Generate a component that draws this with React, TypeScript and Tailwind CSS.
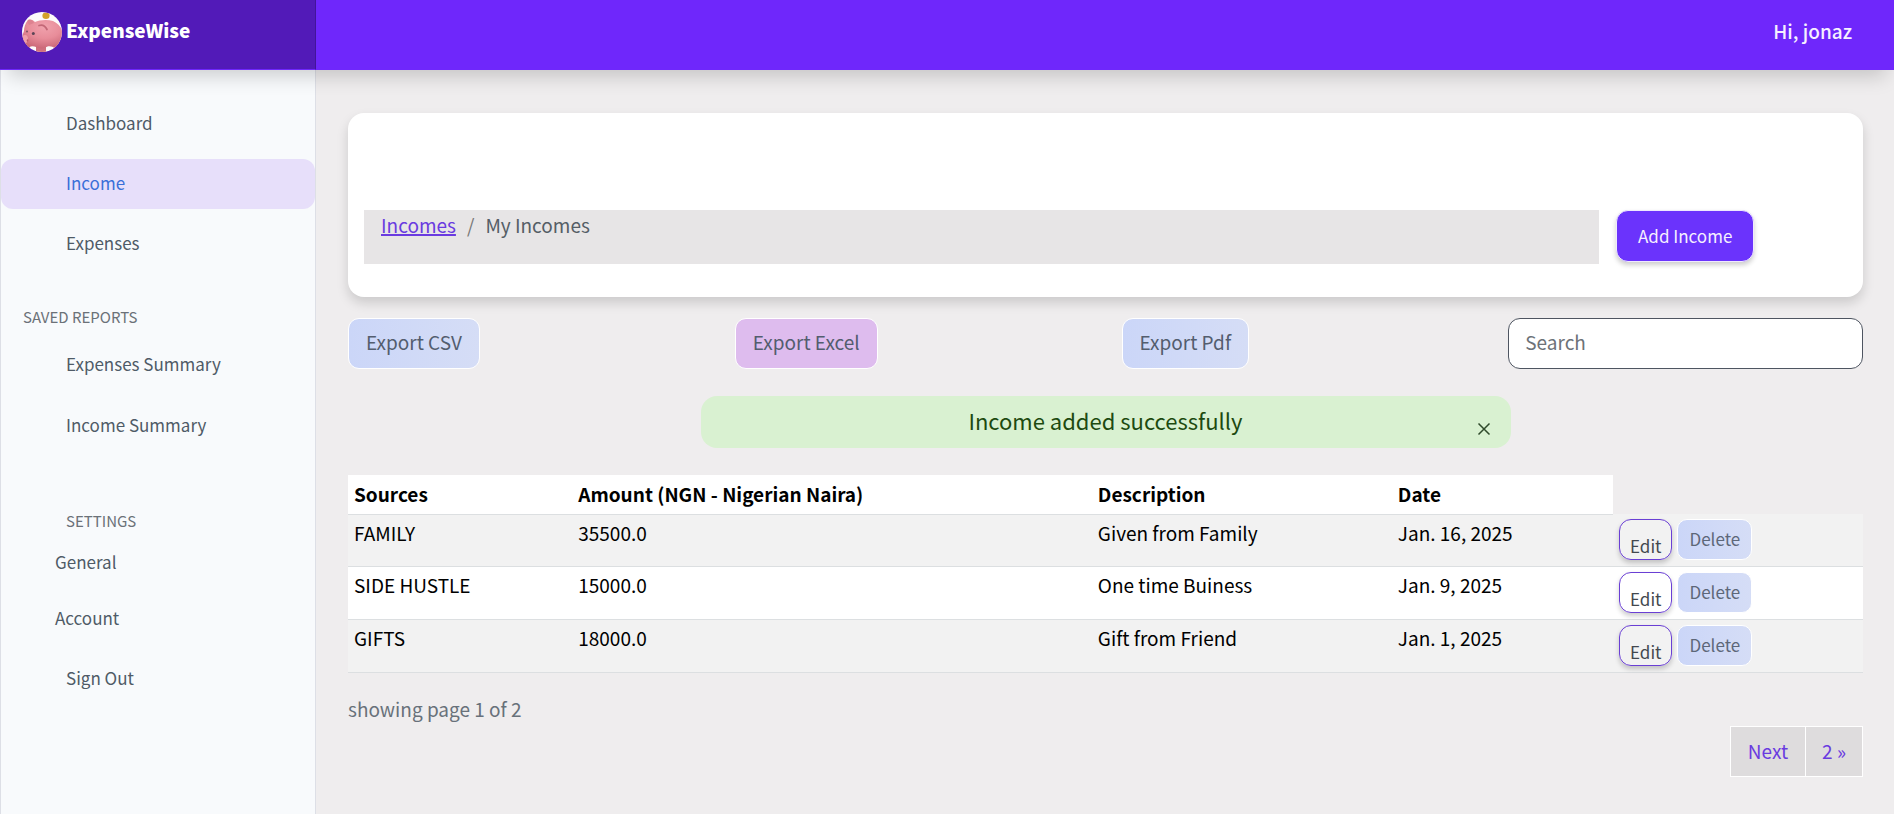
import React from "react";

type Income = { source: string; amount: string; description: string; date: string };

const incomes: Income[] = [
  { source: "FAMILY", amount: "35500.0", description: "Given from Family", date: "Jan. 16, 2025" },
  { source: "SIDE HUSTLE", amount: "15000.0", description: "One time Buiness", date: "Jan. 9, 2025" },
  { source: "GIFTS", amount: "18000.0", description: "Gift from Friend", date: "Jan. 1, 2025" },
];

function PiggyLogo() {
  return (
    <svg viewBox="0 0 40 40" className="size-10 shrink-0" aria-hidden="true">
      <defs>
        <clipPath id="logo-clip">
          <circle cx="20" cy="20" r="20" />
        </clipPath>
        <radialGradient id="pig-body" cx="0.55" cy="0.25" r="0.8">
          <stop offset="0" stopColor="#f0a2ad" />
          <stop offset="0.5" stopColor="#e88d9a" />
          <stop offset="1" stopColor="#c76373" />
        </radialGradient>
      </defs>
      <g clipPath="url(#logo-clip)">
        <rect width="40" height="40" fill="#fdfafa" />
        <path d="M14 33h10v7H14z" fill="#cf6f7e" />
        <path d="M3 31h6l-2 8H4zM31 31h8l-2 8h-5z" fill="#d87685" />
        <path
          d="M6 8c3-1 5 0 7 2 4-2 12-3 18-1 6 3 10 8 10 14 0 7-4 11-10 12-3-1-6-1-8 1-4 1-7 0-9-1-2-1-5-1-7 0C3 34 0 31 0 27c0-3 1-5 2-8 0-4 1-7 4-11z"
          fill="url(#pig-body)"
        />
        <path d="M6 8c3-1 5 0 6 3l-5 2c-1-2-2-3-1-5z" fill="#dd8290" />
        <ellipse cx="3" cy="27" rx="3" ry="4" fill="#f0a0aa" />
        <ellipse cx="5.500" cy="28.500" rx="0.8" ry="1.2" fill="#b95666" />
        <path d="M17 13.500c3-1 6 0 8 4" fill="none" stroke="#c36877" strokeWidth="1.800" strokeLinecap="round" />
        <circle cx="11.300" cy="21.500" r="1.500" fill="#5b4556" />
        <circle cx="5" cy="19.500" r="1" fill="#7a5360" />
        <ellipse cx="24" cy="3.700" rx="3.600" ry="3.200" fill="#d2a02a" />
      </g>
    </svg>
  );
}

function NavLink({ label, active = false }: { label: string; active?: boolean }) {
  return (
    <a
      href="#"
      aria-current={active ? "page" : undefined}
      className={
        active
          ? "flex h-[50px] items-center rounded-xl bg-[#e7dffa] pb-0.5 pl-[65px] text-[#3a6fd8]"
          : "flex h-[50px] items-center rounded-xl pb-0.5 pl-[65px] text-[#4f5b67]"
      }
    >
      {label}
    </a>
  );
}

function Header() {
  return (
    <header className="relative z-10 flex h-[70px] bg-[#6f27fb] shadow-[0_14px_20px_-8px_rgba(0,0,0,0.18)]">
      <div className="flex w-[316px] items-start border-r border-b border-r-[#43149a] border-b-[#6f27fb] bg-[#521ab8] pt-3 pl-[22px]">
        <PiggyLogo />
        <span className="ml-1 text-[19px] leading-9 font-black text-white">ExpenseWise</span>
      </div>
      <div className="flex flex-1 items-center justify-end pr-[42px] pb-2 text-[19px] font-medium text-[#f6f0ff]">
        Hi, jonaz
      </div>
    </header>
  );
}

function Sidebar() {
  return (
    <nav className="w-[316px] shrink-0 border-x border-[#dddfe6] bg-[#f8fafc] pt-[29px] text-[17px]">
      <div className="flex flex-col gap-2.5">
        <NavLink label="Dashboard" />
        <NavLink label="Income" active />
        <NavLink label="Expenses" />
      </div>
      <h2 className="mt-9 pl-[22px] text-[15px] leading-6 text-[#6b7178]">SAVED REPORTS</h2>
      <div className="mt-[11px] flex flex-col gap-[11px]">
        <NavLink label="Expenses Summary" />
        <NavLink label="Income Summary" />
      </div>
      <h2 className="mt-[58px] pl-[65px] text-[15px] leading-6 text-[#6b7178]">SETTINGS</h2>
      <div className="mt-[17px] flex flex-col gap-8 pl-[54px] leading-6 text-[#4f5b67]">
        <a href="#">General</a>
        <a href="#">Account</a>
      </div>
      <div className="mt-6">
        <NavLink label="Sign Out" />
      </div>
    </nav>
  );
}

function ExportButton({ label, purple = false }: { label: string; purple?: boolean }) {
  return (
    <div>
      <button
        type="button"
        className={
          purple
            ? "h-[51px] rounded-[11px] border border-white bg-[#debcee] px-[17px] pb-1 text-[#535d6e]"
            : "h-[51px] rounded-[11px] border border-white bg-linear-to-r from-[#cbd6f8] to-[#d5ddf6] px-[17px] pb-1 text-[#535d6e]"
        }
      >
        {label}
      </button>
    </div>
  );
}

function IncomeTable() {
  return (
    <table className="mt-[27px] w-full table-fixed border-collapse text-left text-black">
      <colgroup>
        <col className="w-[14.8%]" />
        <col className="w-[34.3%]" />
        <col className="w-[19.8%]" />
        <col className="w-[14.6%]" />
        <col />
      </colgroup>
      <thead>
        <tr>
          {["Sources", "Amount (NGN - Nigerian Naira)", "Description", "Date"].map((h) => (
            <th key={h} scope="col" className="h-[39px] border-b border-[#dcdfe1] bg-white px-1.5 pb-px font-bold">
              {h}
            </th>
          ))}
          <td />
        </tr>
      </thead>
      <tbody>
        {incomes.map((row) => (
          <tr key={row.source} className="border-b border-[#dcdfe1] bg-white align-top odd:bg-[#f2f2f2]">
            <td className="px-1.5 pt-1">{row.source}</td>
            <td className="px-1.5 pt-1">{row.amount}</td>
            <td className="px-1.5 pt-1">{row.description}</td>
            <td className="px-1.5 pt-1">{row.date}</td>
            <td className="px-1.5 pt-[5px] pb-1.5">
              <div className="flex gap-[5px] text-[17px] leading-5">
                <a
                  href="#"
                  className="h-[41px] rounded-xl border border-[#6a3fd4] px-2.5 pt-4 text-[#43484f] shadow-[0_3px_5px_rgba(0,0,0,0.2)]"
                >
                  Edit
                </a>
                <button
                  type="button"
                  className="h-[41px] rounded-[10px] border border-white bg-linear-to-r from-[#cbd6f8] to-[#d5ddf6] px-[11px] pb-0.5 text-[#5d6779]"
                >
                  Delete
                </button>
              </div>
            </td>
          </tr>
        ))}
      </tbody>
    </table>
  );
}

export default function App() {
  return (
    <div className="flex min-h-screen flex-col bg-[#efedee] font-['Noto_Sans_CJK_JP','Source_Sans_3',sans-serif] text-[19px] leading-7">
      <Header />
      <div className="flex flex-1">
        <Sidebar />
        <main className="flex-1 pt-[43px] pr-[31px] pb-9 pl-8">
          <section className="flex gap-[17px] rounded-2xl bg-white px-4 pt-[97px] pb-[33px] shadow-[0_6px_12px_rgba(0,0,0,0.15)]">
            <nav aria-label="Breadcrumb" className="h-[54px] flex-1 bg-[#e7e5e6] px-[17px] pt-px">
              <ol className="flex gap-[11px] text-[#555e66]">
                <li>
                  <a href="#" className="text-[#6a3be0] underline decoration-2">
                    Incomes
                  </a>
                </li>
                <li aria-hidden="true" className="text-[#777]">
                  /
                </li>
                <li>My Incomes</li>
              </ol>
            </nav>
            <div className="w-[231px]">
              <button
                type="button"
                className="h-[52px] rounded-xl border border-[#efe9ff] bg-[#6b33fc] px-[21px] text-[17px] text-[#f6f0ff] shadow-[0_3px_5px_rgba(0,0,0,0.2)]"
              >
                Add Income
              </button>
            </div>
          </section>

          <div className="mt-[21px] grid grid-cols-4 gap-8">
            <ExportButton label="Export CSV" />
            <ExportButton label="Export Excel" purple />
            <ExportButton label="Export Pdf" />
            <input
              type="text"
              aria-label="Search"
              placeholder="Search"
              className="h-[51px] w-full rounded-xl border border-[#4e5561] bg-white px-4 pb-1 placeholder:text-[#6d7278]"
            />
          </div>

          <div
            role="alert"
            className="relative mx-auto mt-[27px] flex h-[52px] w-[810px] max-w-full items-center justify-center rounded-2xl bg-[#d9f1d1] pb-1 text-[22px] text-[#1d4a10]"
          >
            Income added successfully
            <button type="button" aria-label="Close" className="absolute right-5 bottom-3 text-[#2f4a2b]">
              <svg viewBox="0 0 14 14" className="size-3.5" stroke="currentColor" strokeWidth="1.500" fill="none">
                <path d="M1.500 1.500l11 11M12.500 1.500l-11 11" />
              </svg>
            </button>
          </div>

          <IncomeTable />

          <p className="mt-[22px] text-[#68717a]">showing page 1 of 2</p>

          <nav aria-label="Pagination" className="mt-[3px] flex justify-end text-[#6a3be0]">
            <a href="#" className="flex h-[51px] items-center border border-white bg-[#dedcdd] px-[17px] pb-0.5">
              Next
            </a>
            <a href="#" className="flex h-[51px] items-center border border-l-0 border-white bg-[#dedcdd] px-4 pb-0.5">
              2 »
            </a>
          </nav>
        </main>
      </div>
    </div>
  );
}
